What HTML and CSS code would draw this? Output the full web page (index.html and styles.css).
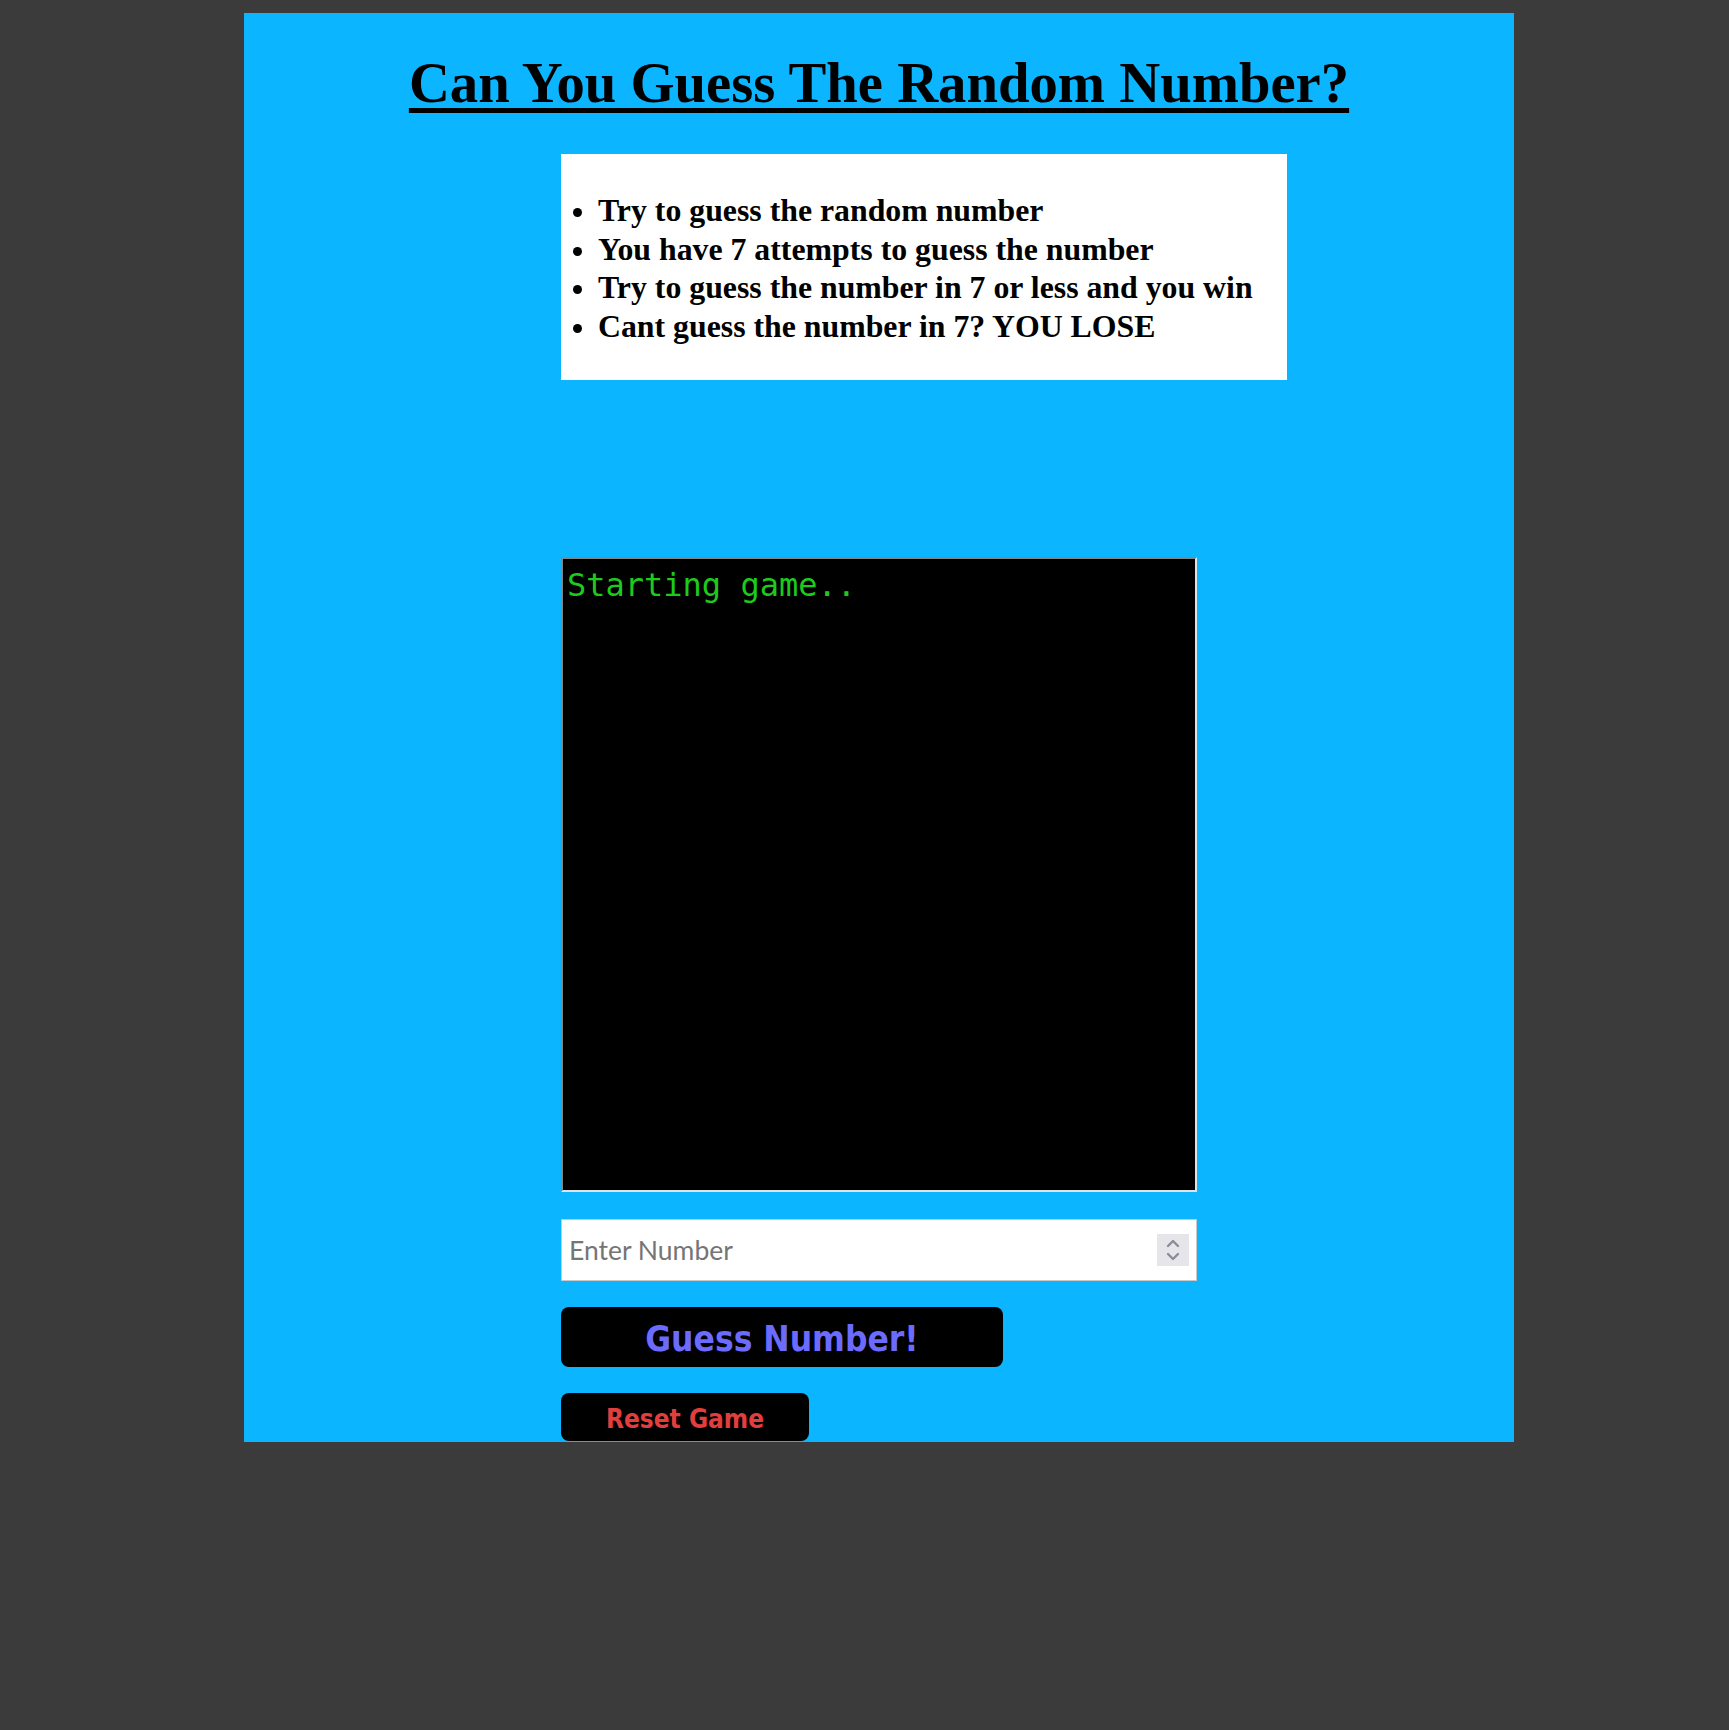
FILE: index.html
```html
<!DOCTYPE html>
<html lang="en">
<head>
<meta charset="utf-8">
<title>Guess The Random Number</title>
<link rel="stylesheet" href="styles.css">
</head>
<body>
<div class="panel">
  <h1 class="title">Can You Guess The Random Number?</h1>
  <div class="column">
    <div class="rules">
      <ul class="rules-list">
        <li>Try to guess the random number</li>
        <li>You have 7 attempts to guess the number</li>
        <li>Try to guess the number in 7 or less and you win</li>
        <li>Cant guess the number in 7? YOU LOSE</li>
      </ul>
    </div>
    <div class="terminal">Starting game..</div>
    <div class="field">
      <input class="number-input" type="number" placeholder="Enter Number">
      <span class="spin">
        <svg width="14" height="24" viewBox="0 0 14 24" fill="none" stroke="#8e8a99" stroke-width="2.4" stroke-linecap="round" stroke-linejoin="round">
          <path d="M2 8 L7 3 L12 8"/>
          <path d="M2 16 L7 21 L12 16"/>
        </svg>
      </span>
    </div>
    <button class="btn guess" type="button">Guess Number!</button>
    <button class="btn reset" type="button">Reset Game</button>
  </div>
</div>
</body>
</html>
```

FILE: styles.css
```css
html, body {
  background: #3b3b3b;
}
body {
  margin: 8px;
}
.panel {
  margin: 5px 0 0 236px;
  width: 1270px;
  height: 1429px;
  background: #0bb5ff;
  display: flex;
  flex-direction: column;
}
.title {
  margin: 0;
  padding-top: 37px;
  text-align: center;
  font-family: "Liberation Serif", "Times New Roman", serif;
  font-weight: bold;
  font-size: 56.7px;
  line-height: 65px;
  color: #000;
  text-decoration: underline;
  text-decoration-thickness: 5px;
  text-underline-offset: 6px;
}
.column {
  padding-left: 317px;
  display: flex;
  flex-direction: column;
  align-items: flex-start;
  margin-top: 39px;
}
.rules {
  width: 726px;
  background: #fff;
  padding: 38px 0 34px;
  box-sizing: border-box;
  height: 226px;
}
.rules-list {
  margin: 0;
  padding-left: 37px;
  font-family: "Liberation Serif", "Times New Roman", serif;
  font-weight: bold;
  font-size: 31.8px;
  line-height: 38.5px;
  color: #000;
}
.terminal {
  margin-top: 177px;
  width: 636px;
  height: 635px;
  box-sizing: border-box;
  background: #000;
  border-style: solid;
  border-width: 2px;
  border-color: #858585 #e3e3e3 #e3e3e3 #858585;
  padding: 8px 4px;
  font-family: "DejaVu Sans Mono", monospace;
  font-size: 32px;
  line-height: 37px;
  color: #1ccb1c;
}
.field {
  position: relative;
  margin-top: 27px;
  width: 636px;
  height: 62px;
}
.number-input {
  width: 100%;
  height: 100%;
  box-sizing: border-box;
  border: 1px solid #c9c9c9;
  background: #fff;
  padding: 0 48px 0 7px;
  margin: 0;
  font-family: Lato, "Open Sans", sans-serif;
  font-size: 26.5px;
  color: #000;
  outline: none;
  -moz-appearance: textfield;
  appearance: textfield;
}
.number-input::placeholder {
  color: #757575;
}
.number-input::-webkit-inner-spin-button,
.number-input::-webkit-outer-spin-button {
  -webkit-appearance: none;
  margin: 0;
}
.spin {
  position: absolute;
  right: 8px;
  top: 15px;
  width: 32px;
  height: 32px;
  background: #e6e5ea;
  display: flex;
  align-items: center;
  justify-content: center;
}
.btn {
  border: none;
  background: #000;
  border-radius: 8px;
  padding: 3px 0 0;
  margin: 0;
  font-family: "DejaVu Sans Condensed", "DejaVu Sans", sans-serif;
  font-stretch: condensed;
  font-weight: bold;
  cursor: pointer;
}
.guess {
  margin-top: 26px;
  width: 442px;
  height: 60px;
  font-size: 35px;
  color: #6b6bff;
}
.reset {
  margin-top: 26px;
  width: 248px;
  height: 48px;
  font-size: 26px;
  color: #e23e3e;
}
```
